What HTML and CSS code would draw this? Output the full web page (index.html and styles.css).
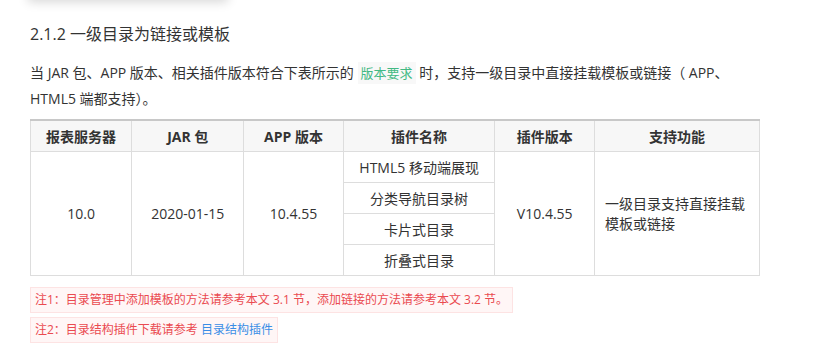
FILE: index.html
```html
<!DOCTYPE html>
<html lang="zh-CN">
<head>
  <meta charset="UTF-8" />
  <title>2.1.2 一级目录为链接或模板</title>
  <link rel="stylesheet" href="styles.css">
</head>
<body>

  <div class="top-card"></div>

  <div class="content">
    <h3>2.1.2 一级目录为链接或模板</h3>

    <p>当 JAR 包、APP 版本、相关插件版本符合下表所示的 <code>版本要求</code> 时，支持一级目录中直接挂载模板或链接（ APP、HTML5 端都支持）。</p>

    <table class="req-table">
      <thead>
        <tr>
          <th class="c1">报表服务器</th>
          <th class="c2">JAR 包</th>
          <th class="c3">APP 版本</th>
          <th class="c4">插件名称</th>
          <th class="c5">插件版本</th>
          <th class="c6">支持功能</th>
        </tr>
      </thead>
      <tbody>
        <tr>
          <td rowspan="4">10.0</td>
          <td rowspan="4">2020-01-15</td>
          <td rowspan="4">10.4.55</td>
          <td>HTML5 移动端展现</td>
          <td rowspan="4">V10.4.55</td>
          <td rowspan="4" class="left">一级目录支持直接挂载模板或链接</td>
        </tr>
        <tr><td>分类导航目录树</td></tr>
        <tr><td>卡片式目录</td></tr>
        <tr><td>折叠式目录</td></tr>
      </tbody>
    </table>

    <div class="note">注1：目录管理中添加模板的方法请参考本文 3.1 节，添加链接的方法请参考本文 3.2 节。</div>
    <div class="note">注2：目录结构插件下载请参考 <a href="#">目录结构插件</a></div>
  </div>

</body>
</html>
```

FILE: styles.css
```css
body {
  font-family: "Open Sans", "Noto Sans CJK SC", sans-serif;
  color: #333;
  background-color: #fff;
  margin: 0;
  padding: 0;
  position: relative;
}

.top-card {
  position: absolute;
  top: -40px;
  left: 28px;
  width: 200px;
  height: 40px;
  background-color: #fff;
  box-shadow: 0 2px 10px rgba(0, 0, 0, 0.16);
}

.content {
  width: 730px;
  padding: 0 30px;
}

h3 {
  font-size: 16px;
  font-weight: normal;
  line-height: 24px;
  margin: 22px 0 0;
  color: #333;
}

p {
  font-size: 14px;
  line-height: 26px;
  margin: 14px 0 0;
}

code {
  font-family: "Open Sans", "Noto Sans CJK SC", sans-serif;
  font-size: 13px;
  color: #42b983;
  background-color: #f8f8f8;
  padding: 2px 3px;
}

.req-table {
  width: 730px;
  margin-top: 7px;
  border-collapse: collapse;
  border-top: 2px solid #c8c8c8;
  font-size: 14px;
}

.req-table th,
.req-table td {
  border: 1px solid #ddd;
  text-align: center;
  padding: 0 10px;
  height: 30px;
}

.req-table th {
  background-color: #f7f7f7;
  font-weight: bold;
  border-top: none;
}

.req-table td.left {
  text-align: left;
  line-height: 20px;
}

.c1 { width: 81px; }
.c2 { width: 92px; }
.c3 { width: 79px; }
.c4 { width: 132px; }
.c5 { width: 79px; }
.c6 { width: 146px; }

.note {
  display: table;
  margin-top: 4px;
  padding: 0 4px;
  font-size: 12px;
  line-height: 24px;
  color: #ea4a50;
  background-color: #fff6f6;
  border: 1px solid #fde3e3;
}

.req-table + .note {
  margin-top: 11px;
}

.note a {
  color: #3a8ee6;
  text-decoration: none;
}
```
